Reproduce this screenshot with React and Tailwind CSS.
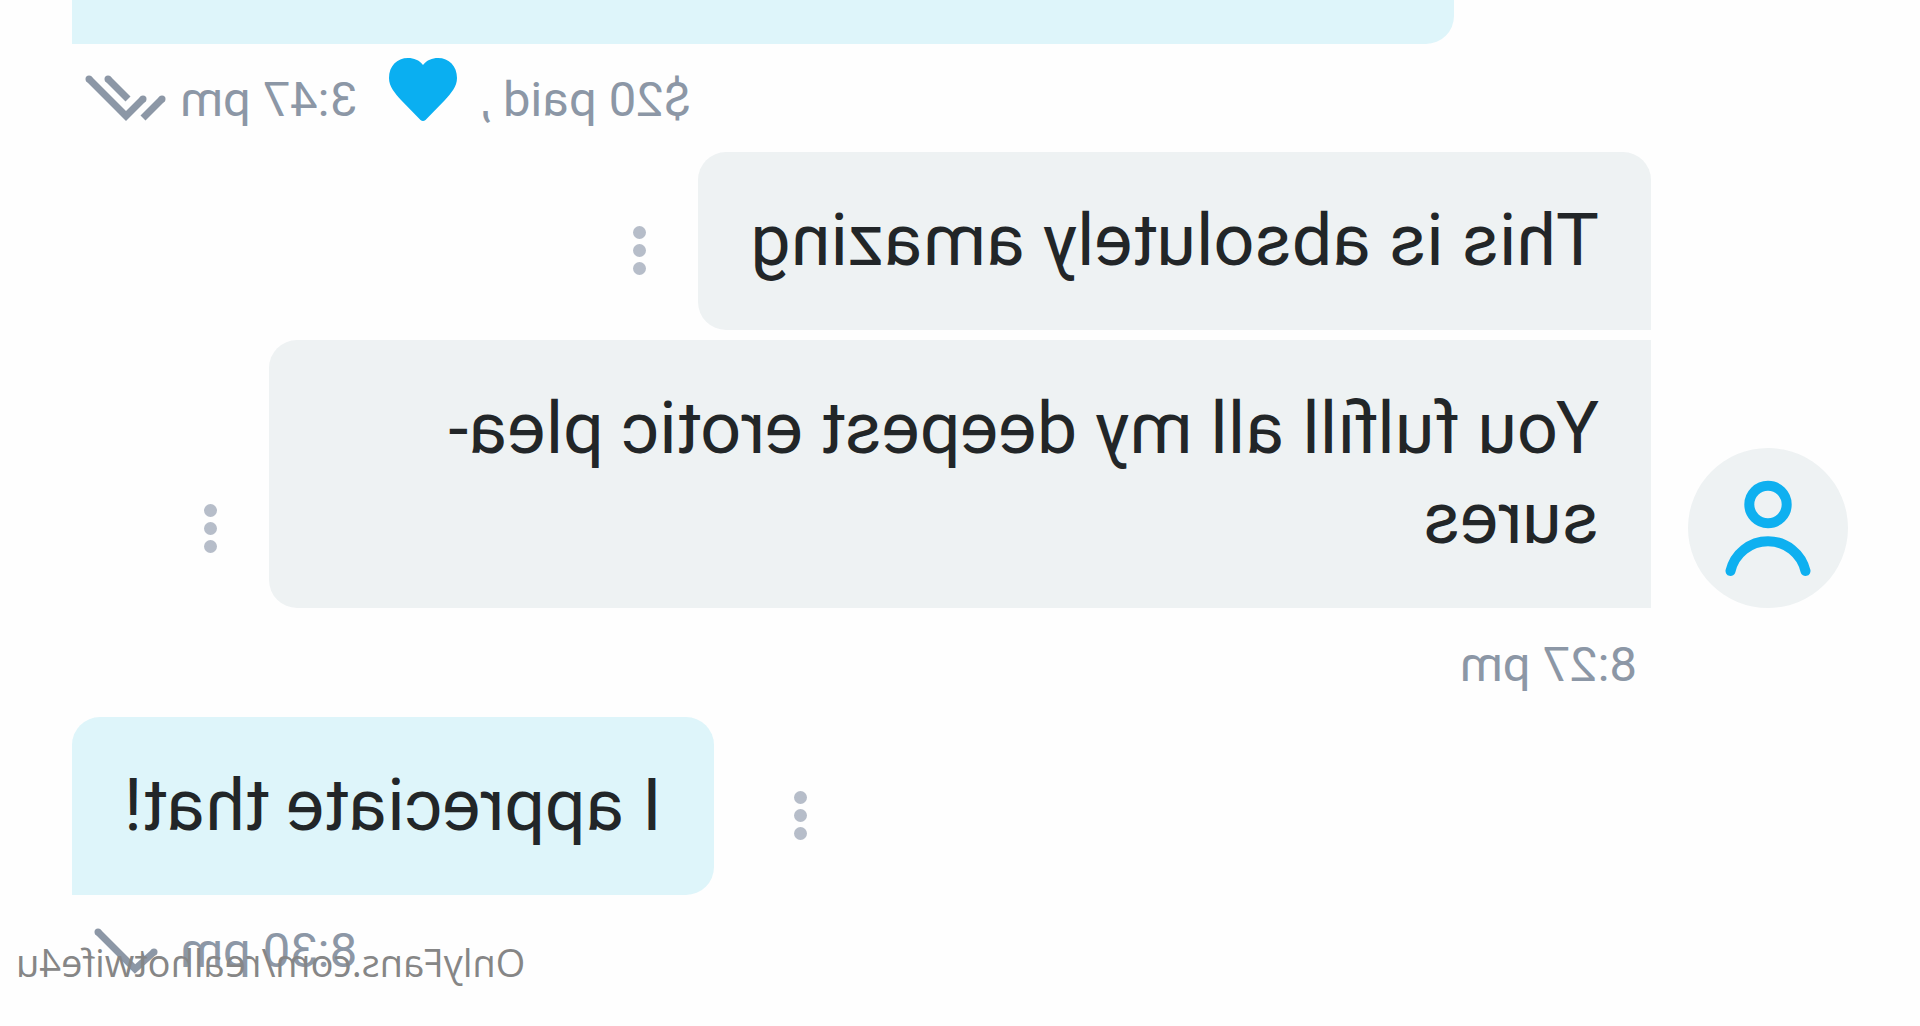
const bubbleTone = {
  theirs: 'bg-[#eef2f3]',
  mine: 'bg-[#def5fa]',
};

function Bubble({ tone, corners, children }) {
  return (
    <div className={`px-[52px] py-11 text-[72px] leading-[90px] text-[#222628] ${bubbleTone[tone]} ${corners}`}>
      {children}
    </div>
  );
}

function MenuButton({ className }) {
  return (
    <button type="button" aria-label="Message options" className={`flex shrink-0 flex-col gap-[5px] pb-[55px] ${className}`}>
      <span className="size-[13px] rounded-full bg-[#b6bdc9]" />
      <span className="size-[13px] rounded-full bg-[#b6bdc9]" />
      <span className="size-[13px] rounded-full bg-[#b6bdc9]" />
    </button>
  );
}

function Avatar() {
  return (
    <div className="flex size-40 shrink-0 items-center justify-center rounded-full bg-[#eef2f3]">
      <svg viewBox="0 0 160 160" className="size-40" fill="none" stroke="#0eb0f0" strokeWidth="10" strokeLinecap="round">
        <circle cx="80" cy="56.5" r="18.7" />
        <path d="M42.5 123A38.5 38.5 0 0 1 117.5 123" />
      </svg>
    </div>
  );
}

function DoubleCheck() {
  return (
    <svg viewBox="0 0 84 50" className="h-[50px] w-[84px]" fill="none" stroke="#8c97a6" strokeWidth="7">
      <path d="M79 4L42 41L25 24" />
      <path d="M60 4L40 24" />
      <path d="M25 43L6 24" />
      <g fill="#8c97a6" stroke="none">
        <circle cx="79" cy="4" r="3.5" />
        <circle cx="25" cy="24" r="3.5" />
        <circle cx="60" cy="4" r="3.5" />
        <circle cx="6" cy="24" r="3.5" />
      </g>
    </svg>
  );
}

function SingleCheck() {
  return (
    <svg viewBox="0 0 84 50" className="h-[50px] w-[84px]" fill="none" stroke="#8c97a6" strokeWidth="7">
      <path d="M70 6L33 43L14 26" />
      <g fill="#8c97a6" stroke="none">
        <circle cx="70" cy="6" r="3.5" />
        <circle cx="14" cy="26" r="3.5" />
      </g>
    </svg>
  );
}

function Heart() {
  return (
    <svg viewBox="0 0 68 66" className="h-[66px] w-[68px]" fill="#0aaff1">
      <path d="M34 8C38 3 43 1 49 1C60 1 68 9 68 21C68 30 62 36 56 43L36.5 63Q34 65 31.5 63L12 43C6 36 0 30 0 21C0 9 8 1 19 1C25 1 30 3 34 8Z" />
    </svg>
  );
}

export default function App() {
  return (
    <div className="relative min-h-screen -scale-x-100 overflow-hidden bg-[#fefefe] px-[72px] font-[Roboto,sans-serif] text-[#8c97a6]">
      <div className="ml-auto h-11 w-full max-w-[1382px] rounded-bl-[28px] bg-[#def5fa]" />
      <div className="flex h-[108px] items-center justify-end pt-1 pr-3 text-[49px]">
        <span>$20 paid</span>
        <span className="ml-3">,</span>
        <span className="mr-8 ml-6 pb-5">
          <Heart />
        </span>
        <time>3:47 pm</time>
        <span className="ml-3">
          <DoubleCheck />
        </span>
      </div>

      <div className="flex items-end gap-[37px]">
        <Avatar />
        <div className="flex flex-1 flex-col gap-[10px]">
          <div className="flex items-end">
            <Bubble tone="theirs" corners="rounded-t-[28px] rounded-br-[28px]">This is absolutely amazing</Bubble>
            <MenuButton className="ml-[52px]" />
          </div>
          <div className="flex items-end">
            <Bubble tone="theirs" corners="w-full max-w-[1382px] rounded-r-[28px]">
              You fulfill all my deepest erotic plea-
              <br />
              sures
            </Bubble>
            <MenuButton className="ml-[52px]" />
          </div>
        </div>
      </div>
      <div className="flex h-[109px] items-center pt-1 pl-[211px] text-[49px]">
        <time>8:27 pm</time>
      </div>

      <div className="flex items-end justify-end">
        <MenuButton className="mr-20" />
        <Bubble tone="mine" corners="rounded-t-[28px] rounded-bl-[28px]">I appreciate that!</Bubble>
      </div>
      <div className="flex h-[108px] items-center justify-end pt-1 pr-3 text-[49px]">
        <time>8:30 pm</time>
        <span className="ml-3">
          <SingleCheck />
        </span>
      </div>

      <a href="#profile" className="absolute right-4 bottom-[38px] font-['Open_Sans',sans-serif] text-[38px] leading-[52px] text-[#868686]">
        OnlyFans.com/realhotwife4u
      </a>
    </div>
  );
}
